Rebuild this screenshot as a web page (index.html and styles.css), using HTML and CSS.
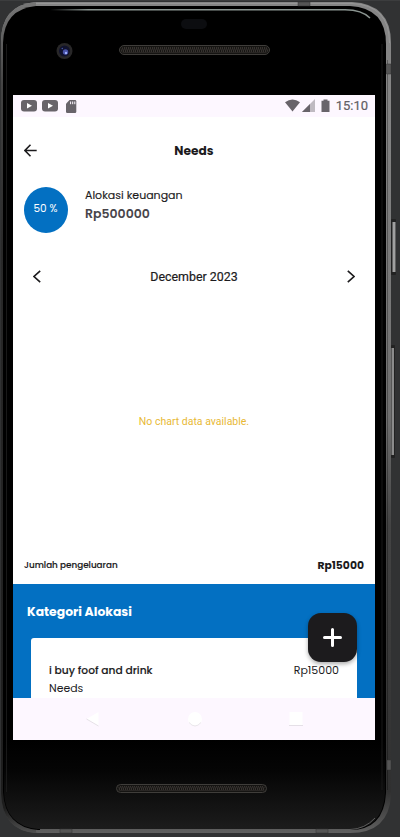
FILE: index.html
```html
<!DOCTYPE html>
<html lang="id">
<head>
<meta charset="utf-8">
<title>Needs</title>
<link rel="stylesheet" href="styles.css">
</head>
<body>
<div class="stage">
  <svg class="chassis" width="400" height="837" viewBox="0 0 400 837" aria-hidden="true">
    <defs>
      <linearGradient id="rim" x1="0" y1="0" x2="0" y2="1">
        <stop offset="0" stop-color="#858585"/><stop offset=".12" stop-color="#858585"/><stop offset=".5" stop-color="#707070"/><stop offset=".63" stop-color="#444"/><stop offset=".95" stop-color="#303030"/><stop offset="1" stop-color="#606060"/>
      </linearGradient>
      <linearGradient id="leftrim" x1="0" y1="0" x2="0" y2="1">
        <stop offset="0" stop-color="#777"/><stop offset=".1" stop-color="#444"/><stop offset=".3" stop-color="#292929"/><stop offset=".97" stop-color="#1d1d1d"/><stop offset="1" stop-color="#505050"/>
      </linearGradient>
      <linearGradient id="chin" x1="0" y1="0" x2="0" y2="1">
        <stop offset="0" stop-color="#000"/><stop offset=".35" stop-color="#050505"/><stop offset="1" stop-color="#1c1c1c"/>
      </linearGradient>
      <linearGradient id="shine" x1="0" y1="0" x2="1" y2="0">
        <stop offset="0" stop-color="#8a9490" stop-opacity="0"/><stop offset=".12" stop-color="#8a9490"/><stop offset="1" stop-color="#8a9490"/>
      </linearGradient>
      <pattern id="mesh" width="4" height="6" patternUnits="userSpaceOnUse">
        <path d="M0 0l2 3-2 3M2 0l2 3-2 3" fill="none" stroke="#4c4843" stroke-width=".7"/>
      </pattern>
    </defs>
    <rect width="400" height="837" fill="#313233"/>
    <rect width="400" height="1" fill="#3c3d3e"/>
    <rect x="391" y="219" width="5" height="56" rx="1" fill="#222"/>
    <rect x="392.5" y="222" width="3" height="50" fill="#a0a0a0"/>
    <rect x="391" y="345" width="4" height="113" rx="1" fill="#222"/>
    <rect x="391.5" y="348" width="2.500" height="107" fill="#8b8b8b"/>
    <path d="M36 2H352Q391 4 391 43V795Q389 833 350 833H38Q2 831 1 793V42Q1 5 36 2Z" fill="url(#rim)"/>
    <path d="M1 42Q1 5 36 2V833Q2 831 1 793Z" fill="url(#leftrim)"/>
    <path d="M36 3.500H352Q389.500 5 389.500 43" fill="none" stroke="#9a9a9a" stroke-width=".8"/>
    <path d="M36 6H350Q386 8 386 44V793Q384 830 350 830H38Q5 827 3 792V43Q4 9 36 6Z" fill="#000"/>
    <path d="M4 740H385V793Q383 829 350 829H38Q5 826 4 792Z" fill="url(#chin)"/>
    <path d="M6.500 44V792M382 44V790" stroke="#191919"/>
    <path d="M387.500 60V790" stroke="#000" stroke-opacity=".3"/>
    <path d="M50 9.800H345Q362 10 370 18" fill="none" stroke="url(#shine)" stroke-width="1.500"/>
    <path d="M40 829.500H350Q365 829 375 818" fill="none" stroke="#5d5d5d"/>
    <path d="M298 2h12v4h-12zM386.500 64h4.500v10h-4.500zM387 760h4v10h-4zM60 829h12v4h-12zM316 829h12v4h-12z" fill="#555" stroke="#333" stroke-width=".5"/>
    <rect x="181" y="19" width="26" height="10" rx="5" fill="#0c0d10"/>
    <circle cx="64.500" cy="51" r="8" fill="#282728"/>
    <circle cx="64.500" cy="51" r="5.500" fill="#10122c"/>
    <circle cx="65.500" cy="52" r="2.700" fill="#4852a8"/>
    <circle cx="66" cy="53" r="1.200" fill="#9eafff"/><circle cx="62.300" cy="48.500" r=".8" fill="#4956a3"/>
    <g fill="#151412" stroke="#3f3d3a">
      <rect x="119.500" y="45.500" width="150" height="9" rx="4.500"/>
      <rect x="116.500" y="784.500" width="150" height="8" rx="4"/>
    </g>
    <rect x="121" y="47" width="147" height="6" rx="3" fill="url(#mesh)"/>
    <rect x="118" y="786" width="147" height="5" rx="2.500" fill="url(#mesh)"/>
  </svg>

  <main class="screen">
    <div class="status">
      <svg class="yt" width="16" height="12" viewBox="0 0 16 12"><rect width="16" height="11.500" rx="3" fill="#68646a"/><path d="M6 3l5 2.700L6 8.500z" fill="#fff"/></svg>
      <svg class="yt" width="16" height="12" viewBox="0 0 16 12"><rect width="16" height="11.500" rx="3" fill="#68646a"/><path d="M6 3l5 2.700L6 8.500z" fill="#fff"/></svg>
      <svg class="sd" width="11" height="13" viewBox="0 0 11 13"><path d="M3.500 0H9q1.300 0 1.300 1.300v10.400Q10.300 13 9 13H1.300Q0 13 0 11.700V3.700z" fill="#68646a"/><path d="M4.600 1.500v2.700M6.700 1.500v2.700M8.800 1.500v2.700" stroke="#fdf7ff" stroke-width="1"/></svg>
      <svg class="signals" width="46" height="14" viewBox="0 0 46 14"><path d="M0 3.200Q7.500-2 15 3.200L7.500 12.500z" fill="#68646a"/><path d="M17 13L30 0V13z" fill="#bfbac1"/><path d="M17 13L25 5V13z" fill="#68646a"/><path d="M36.500 1.700h2V.5h4v1.200h2V13h-8z" fill="#68646a"/></svg>
      <span class="time">15:10</span>
    </div>

    <header class="bar">
      <svg class="back" width="13" height="13" viewBox="0 0 13 13"><path d="M12.700 6.500H1M6.500 .8L.9 6.500l5.600 5.700" /></svg>
      <h1 class="title">Needs</h1>
    </header>

    <section class="summary">
      <div class="percent"><span>50 %</span></div>
      <div class="budget">
        <div class="budget-label">Alokasi keuangan</div>
        <div class="budget-value">Rp500000</div>
      </div>
    </section>

    <nav class="months">
      <svg width="8" height="13" viewBox="0 0 8 13"><path d="M7.200 .8L1 6.500l6.200 5.700"/></svg>
      <span class="month">December 2023</span>
      <svg width="8" height="13" viewBox="0 0 8 13"><path d="M.8 .8L7 6.500 .8 12.200"/></svg>
    </nav>

    <section class="chart"><span>No chart data available.</span></section>

    <div class="total">
      <span class="total-label">Jumlah pengeluaran</span>
      <span class="total-value">Rp15000</span>
    </div>

    <section class="category">
      <h2 class="category-title"><span>Kategori Alokasi</span></h2>
      <article class="card">
        <div class="row"><span class="item">i buy foof and drink</span><span class="price">Rp15000</span></div>
        <div class="kind"><span>Needs</span></div>
      </article>
      <button class="add" aria-label="Tambah"><svg width="19" height="19" viewBox="0 0 19 19"><path d="M9.500 1.500v16M1.500 9.500h16"/></svg></button>
    </section>

    <footer class="system">
      <svg width="14" height="16" viewBox="0 0 14 16"><path d="M.5 8L12.500 1v14z" fill="#fff"/><path d="M.5 8l12 7" stroke="#dfdae1" stroke-width=".8"/></svg>
      <svg width="16" height="16" viewBox="0 0 16 16"><circle cx="8" cy="8" r="7" fill="#fff"/><path d="M2 11.500q6 7 12 0" fill="none" stroke="#e3dfe5" stroke-width=".8"/></svg>
      <svg width="14" height="16" viewBox="0 0 14 16"><path d="M.5 1h13v13H.5z" fill="#fff"/><path d="M0 14.500h14" stroke="#e5e0e7"/></svg>
    </footer>
  </main>
</div>
</body>
</html>
```
FILE: styles.css
```css
* { box-sizing: border-box; }
body { margin: 0; font-family: Poppins, Inter, sans-serif; color: #1c1b1d; }
h1, h2 { margin: 0; }
svg { display: block; flex: none; }
span, .budget-label, .budget-value { white-space: nowrap; }
.stage { position: relative; width: 400px; height: 837px; padding: 95px 25px 0 13px; overflow: hidden; }
.chassis { position: absolute; inset: 0; }
.screen { position: relative; display: flex; flex-direction: column; width: 362px; height: 645px; background: #fff; overflow: hidden; }

.status { display: flex; align-items: center; height: 22px; padding: 0 7px 0 8px; background: #fdf7ff; flex: none; }
.yt { margin-right: 5px; }
.sd { margin-left: 3px; }
.signals { margin-left: auto; margin-right: 5px; }
.time { font: 400 13px/22px Roboto, sans-serif; color: #625e64; -webkit-text-stroke: .2px #625e64; }

.bar { display: grid; grid-template-columns: 13px 1fr 13px; align-items: center; height: 66px; padding: 1px 11px 0; flex: none; }
.back path, .months path { fill: none; stroke: #1c1b1d; stroke-width: 1.6; }
.title { font-size: 12.2px; font-weight: 700; text-align: center; }

.summary { display: flex; height: 75px; padding: 4px 11px; flex: none; }
.percent { display: grid; place-items: center; width: 44px; height: 46px; padding-bottom: 3px; border-radius: 50%; background: #0370c2; color: #fff; font-size: 10.5px; }
.percent span { margin-left: -1px; }
.budget { margin-left: 17px; }
.budget-label { font-size: 11px; line-height: 17px; -webkit-text-stroke: .15px #1c1b1d; }
.budget-value { font-size: 12.5px; font-weight: 600; line-height: 20px; color: #48454b; }

.months { display: flex; align-items: center; justify-content: space-between; height: 36px; padding: 0 20px 0 20px; flex: none; }
.month { padding-top: 1px; font: 400 12.4px/18px Roboto, sans-serif; -webkit-text-stroke: .2px #1c1b1d; }
.chart { display: grid; place-items: center; height: 252px; padding-top: 2px; flex: none; font: 10.5px Roboto, sans-serif; color: #e8b935; }

.total { display: flex; align-items: center; justify-content: space-between; height: 38px; padding: 0 11px; flex: none; }
.total-label { font-size: 8.8px; font-weight: 500; -webkit-text-stroke: .15px #1c1b1d; }
.total-value { padding-top: 2px; font-size: 10.8px; font-weight: 700; }

.category { position: relative; flex: 1; background: #0370c2; overflow: hidden; padding: 19px 18px 0; }
.category-title { height: 35px; margin-left: -4px; font-size: 12.4px; line-height: 18px; color: #fff; }
.card { height: 90px; padding: 23px 18px 0; border-radius: 3px; background: #fff; }
.row { display: flex; justify-content: space-between; align-items: center; height: 18px; font-size: 11px; }
.item { padding-top: 2px; font-size: 10.7px; font-weight: 500; -webkit-text-stroke: .15px #1c1b1d; }
.kind { padding-top: 1px; font-size: 10.9px; line-height: 18px; }
.add { position: absolute; right: 18px; top: 29px; display: grid; place-items: center; width: 49px; height: 49px; padding: 0; border: 0; border-radius: 13px; background: #1c1b1d; box-shadow: 0 2px 4px #0005; }
.add path { stroke: #fff; stroke-width: 3; stroke-linecap: round; }

.system { display: flex; justify-content: space-between; align-items: center; height: 42px; padding: 0 72px 0 73px; background: #fdf7ff; flex: none; }
```
